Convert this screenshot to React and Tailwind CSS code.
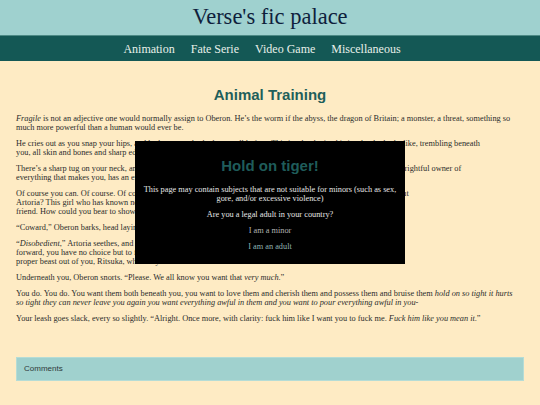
import React from "react";

const serif = { fontFamily: '"Liberation Serif", "Times New Roman", serif' };
const sans = { fontFamily: '"Liberation Sans", Arial, sans-serif' };

function Para({ children, last }) {
  return <p className={last ? "" : "mb-[7px]"}>{children}</p>;
}

export default function App() {
  return (
    <div className="min-h-screen bg-[#feebc4]" style={serif}>
      <header className="h-[35px] bg-[#9fd1cf] flex items-center justify-center">
        <h1 className="text-[22.5px] leading-none text-[#0f1f3d]">Verse's fic palace</h1>
      </header>
      <nav className="h-[26px] bg-[#145855] border-t border-[#4d8a86] flex items-center justify-center">
        {["Animation", "Fate Serie", "Video Game", "Miscellaneous"].map((n) => (
          <a key={n} className="mr-4 text-[12px] text-[#e8f0ea] leading-none">
            {n}
          </a>
        ))}
      </nav>

      <main className="px-4 pt-[25px] pb-6">
        <h2
          className="text-center text-[15px] leading-[18px] font-bold text-[#1f5f5b] mb-[10px]"
          style={sans}
        >
          Animal Training
        </h2>
        <div className="text-[8.3px] leading-[9px] text-[#2b2b2b] whitespace-nowrap">
          <Para>
            <i>Fragile</i> is not an adjective one would normally assign to Oberon. He’s the worm if the abyss, the dragon of Britain; a monster, a threat, something so
            <br />
            much more powerful than a human would ever be.
          </Para>
          <Para>
            He cries out as you snap your hips, and he has never looked so small before. This is what he is, this is what he looks like, trembling beneath
            <br />
            you, all skin and bones and sharp edges.
          </Para>
          <Para>
            There’s a sharp tug on your neck, and your eyes are dragged up to Artoria. Your queen, your master, she who chants, rightful owner of
            <br />
            everything that makes you, has an expression of contempt. “You can do better than that, Ritsuka.”
          </Para>
          <Para>
            Of course you can. Of course. Of course you can do better, you know this, you know you want to break him apart. But
            <br />
            Artoria? This girl who has known nothing but kindness from you, who thinks so highly of you. She thinks you a
            <br />
            friend. How could you bear to show her this?
          </Para>
          <Para>“Coward,” Oberon barks, head laying against the sheets.</Para>
          <Para>
            “<i>Disobedient</i>,” Artoria seethes, and she wraps the leash around her hand, shortening it even more. Pulled
            <br />
            forward, you have no choice but to face her. “Have you forgotten what this training is for. I’ll make a
            <br />
            proper beast out of you, Ritsuka, whether you want it or not.”
          </Para>
          <Para>
            Underneath you, Oberon snorts. “Please. We all know you want that <i>very much</i>.”
          </Para>
          <Para>
            You do. You do. You want them both beneath you, you want to love them and cherish them and possess them and bruise them{" "}
            <i>hold on so tight it hurts</i>
            <br />
            <i>
              so tight they can never leave you again you want everything awful in them and you want to pour everything awful in you-
            </i>
          </Para>
          <Para last>
            Your leash goes slack, every so slightly. “Alright. Once more, with clarity: fuck him like I want you to fuck me.{" "}
            <i>Fuck him like you mean it</i>.”
          </Para>
        </div>

        <section className="mt-[34px] h-[24px] bg-[#a0d1ce] border border-[#b5dcd6] flex items-center px-[7px]">
          <span className="text-[8px] text-[#2e3a3a]" style={sans}>
            Comments
          </span>
        </section>
      </main>

      {/* age gate */}
      <div className="fixed inset-0 flex items-center justify-center">
        <div className="w-[270px] bg-black pt-[16px] pb-[13px] text-center">
          <h3
            className="text-[15px] leading-[18px] font-bold text-[#1f5c5a] mb-[10px]"
            style={sans}
          >
            Hold on tiger!
          </h3>
          <div className="text-[8.3px] leading-[9px] text-[#e6e6e6] whitespace-nowrap">
            <p className="mb-[7px]">
              This page may contain subjects that are not suitable for minors (such as sex,
              <br />
              gore, and/or excessive violence)
            </p>
            <p className="mb-[7px]">Are you a legal adult in your country?</p>
            <p className="mb-[7px]">
              <a className="text-[#b3b3b3]">I am a minor</a>
            </p>
            <p>
              <a className="text-[#8fb3b1]">I am an adult</a>
            </p>
          </div>
        </div>
      </div>
    </div>
  );
}
